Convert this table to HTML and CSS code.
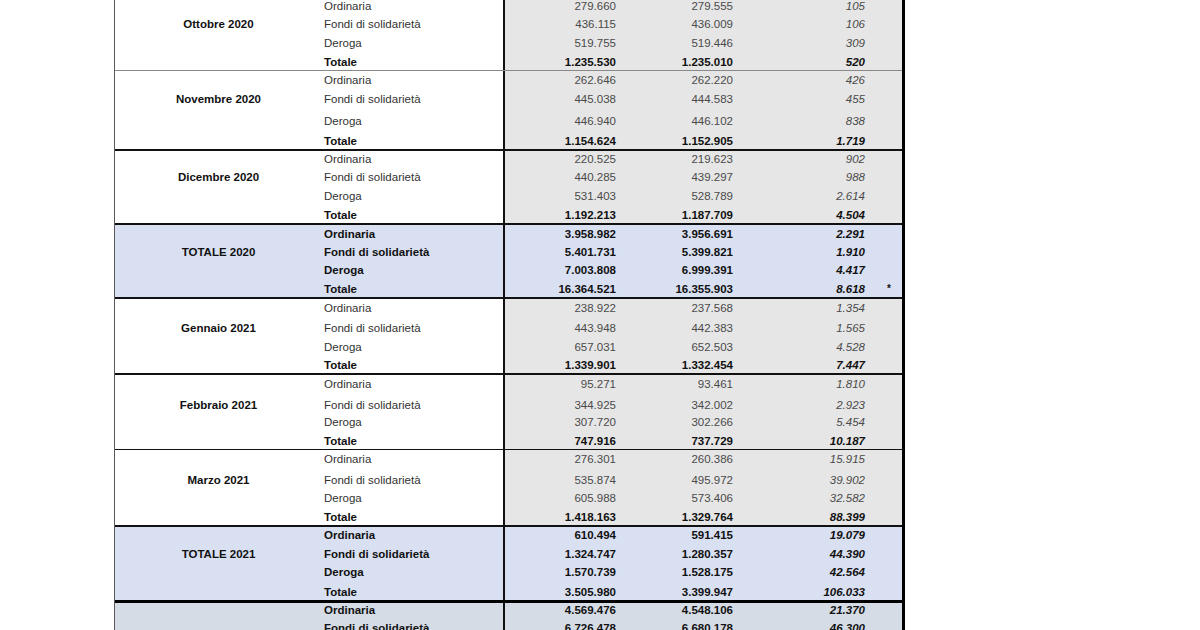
FILE: index.html
```html
<!DOCTYPE html>
<html lang="it">
<head>
<meta charset="utf-8">
<title>Cassa integrazione</title>
<link rel="stylesheet" href="styles.css">
</head>
<body>
<div class="sheet">

  <section class="block month">
    <div class="row h18"><span class="c lbl"></span><span class="c sub">Ordinaria</span><span class="c n n1">279.660</span><span class="c n">279.555</span><span class="c n d">105</span><span class="c x"></span></div>
    <div class="row h18"><span class="c lbl">Ottobre 2020</span><span class="c sub">Fondi di solidarietà</span><span class="c n n1">436.115</span><span class="c n">436.009</span><span class="c n d">106</span><span class="c x"></span></div>
    <div class="row h19"><span class="c lbl"></span><span class="c sub">Deroga</span><span class="c n n1">519.755</span><span class="c n">519.446</span><span class="c n d">309</span><span class="c x"></span></div>
    <div class="row h19 tot"><span class="c lbl"></span><span class="c sub">Totale</span><span class="c n n1">1.235.530</span><span class="c n">1.235.010</span><span class="c n d">520</span><span class="c x"></span></div>
  </section>

  <section class="block month thin">
    <div class="row h17"><span class="c lbl"></span><span class="c sub">Ordinaria</span><span class="c n n1">262.646</span><span class="c n">262.220</span><span class="c n d">426</span><span class="c x"></span></div>
    <div class="row h19"><span class="c lbl">Novembre 2020</span><span class="c sub">Fondi di solidarietà</span><span class="c n n1">445.038</span><span class="c n">444.583</span><span class="c n d">455</span><span class="c x"></span></div>
    <div class="row h22"><span class="c lbl"></span><span class="c sub">Deroga</span><span class="c n n1">446.940</span><span class="c n">446.102</span><span class="c n d">838</span><span class="c x"></span></div>
    <div class="row h20 tot"><span class="c lbl"></span><span class="c sub">Totale</span><span class="c n n1">1.154.624</span><span class="c n">1.152.905</span><span class="c n d">1.719</span><span class="c x"></span></div>
  </section>

  <section class="block month thick">
    <div class="row h16"><span class="c lbl"></span><span class="c sub">Ordinaria</span><span class="c n n1">220.525</span><span class="c n">219.623</span><span class="c n d">902</span><span class="c x"></span></div>
    <div class="row h18"><span class="c lbl">Dicembre 2020</span><span class="c sub">Fondi di solidarietà</span><span class="c n n1">440.285</span><span class="c n">439.297</span><span class="c n d">988</span><span class="c x"></span></div>
    <div class="row h19"><span class="c lbl"></span><span class="c sub">Deroga</span><span class="c n n1">531.403</span><span class="c n">528.789</span><span class="c n d">2.614</span><span class="c x"></span></div>
    <div class="row h19 tot"><span class="c lbl"></span><span class="c sub">Totale</span><span class="c n n1">1.192.213</span><span class="c n">1.187.709</span><span class="c n d">4.504</span><span class="c x"></span></div>
  </section>

  <section class="block total thick">
    <div class="row h17"><span class="c lbl"></span><span class="c sub">Ordinaria</span><span class="c n n1">3.958.982</span><span class="c n">3.956.691</span><span class="c n d">2.291</span><span class="c x"></span></div>
    <div class="row h18"><span class="c lbl">TOTALE 2020</span><span class="c sub">Fondi di solidarietà</span><span class="c n n1">5.401.731</span><span class="c n">5.399.821</span><span class="c n d">1.910</span><span class="c x"></span></div>
    <div class="row h18"><span class="c lbl"></span><span class="c sub">Deroga</span><span class="c n n1">7.003.808</span><span class="c n">6.999.391</span><span class="c n d">4.417</span><span class="c x"></span></div>
    <div class="row h19"><span class="c lbl"></span><span class="c sub">Totale</span><span class="c n n1">16.364.521</span><span class="c n">16.355.903</span><span class="c n d">8.618</span><span class="c x star">*</span></div>
  </section>

  <section class="block month thick">
    <div class="row h17"><span class="c lbl"></span><span class="c sub">Ordinaria</span><span class="c n n1">238.922</span><span class="c n">237.568</span><span class="c n d">1.354</span><span class="c x"></span></div>
    <div class="row h20"><span class="c lbl">Gennaio 2021</span><span class="c sub">Fondi di solidarietà</span><span class="c n n1">443.948</span><span class="c n">442.383</span><span class="c n d">1.565</span><span class="c x"></span></div>
    <div class="row h19"><span class="c lbl"></span><span class="c sub">Deroga</span><span class="c n n1">657.031</span><span class="c n">652.503</span><span class="c n d">4.528</span><span class="c x"></span></div>
    <div class="row h18 tot"><span class="c lbl"></span><span class="c sub">Totale</span><span class="c n n1">1.339.901</span><span class="c n">1.332.454</span><span class="c n d">7.447</span><span class="c x"></span></div>
  </section>

  <section class="block month thick">
    <div class="row h17"><span class="c lbl"></span><span class="c sub">Ordinaria</span><span class="c n n1">95.271</span><span class="c n">93.461</span><span class="c n d">1.810</span><span class="c x"></span></div>
    <div class="row h21"><span class="c lbl">Febbraio 2021</span><span class="c sub">Fondi di solidarietà</span><span class="c n n1">344.925</span><span class="c n">342.002</span><span class="c n d">2.923</span><span class="c x"></span></div>
    <div class="row h17"><span class="c lbl"></span><span class="c sub">Deroga</span><span class="c n n1">307.720</span><span class="c n">302.266</span><span class="c n d">5.454</span><span class="c x"></span></div>
    <div class="row h19 tot"><span class="c lbl"></span><span class="c sub">Totale</span><span class="c n n1">747.916</span><span class="c n">737.729</span><span class="c n d">10.187</span><span class="c x"></span></div>
  </section>

  <section class="block month mid">
    <div class="row h17"><span class="c lbl"></span><span class="c sub">Ordinaria</span><span class="c n n1">276.301</span><span class="c n">260.386</span><span class="c n d">15.915</span><span class="c x"></span></div>
    <div class="row h21"><span class="c lbl">Marzo 2021</span><span class="c sub">Fondi di solidarietà</span><span class="c n n1">535.874</span><span class="c n">495.972</span><span class="c n d">39.902</span><span class="c x"></span></div>
    <div class="row h18"><span class="c lbl"></span><span class="c sub">Deroga</span><span class="c n n1">605.988</span><span class="c n">573.406</span><span class="c n d">32.582</span><span class="c x"></span></div>
    <div class="row h19 tot"><span class="c lbl"></span><span class="c sub">Totale</span><span class="c n n1">1.418.163</span><span class="c n">1.329.764</span><span class="c n d">88.399</span><span class="c x"></span></div>
  </section>

  <section class="block total thick">
    <div class="row h16"><span class="c lbl"></span><span class="c sub">Ordinaria</span><span class="c n n1">610.494</span><span class="c n">591.415</span><span class="c n d">19.079</span><span class="c x"></span></div>
    <div class="row h19"><span class="c lbl">TOTALE 2021</span><span class="c sub">Fondi di solidarietà</span><span class="c n n1">1.324.747</span><span class="c n">1.280.357</span><span class="c n d">44.390</span><span class="c x"></span></div>
    <div class="row h18"><span class="c lbl"></span><span class="c sub">Deroga</span><span class="c n n1">1.570.739</span><span class="c n">1.528.175</span><span class="c n d">42.564</span><span class="c x"></span></div>
    <div class="row h20"><span class="c lbl"></span><span class="c sub">Totale</span><span class="c n n1">3.505.980</span><span class="c n">3.399.947</span><span class="c n d">106.033</span><span class="c x"></span></div>
  </section>

  <section class="block grand heavy">
    <div class="row h15"><span class="c lbl"></span><span class="c sub">Ordinaria</span><span class="c n n1">4.569.476</span><span class="c n">4.548.106</span><span class="c n d">21.370</span><span class="c x"></span></div>
    <div class="row h18"><span class="c lbl"></span><span class="c sub">Fondi di solidarietà</span><span class="c n n1">6.726.478</span><span class="c n">6.680.178</span><span class="c n d">46.300</span><span class="c x"></span></div>
  </section>

</div>
</body>
</html>
```

FILE: styles.css
```css
html, body {
  margin: 0;
  padding: 0;
  background: #ffffff;
  overflow: hidden;
}

body {
  font-family: "Liberation Sans", Arial, sans-serif;
  font-size: 11.5px;
  color: #333333;
}

.sheet {
  margin: -4px 0 0 114px;
  width: 787px;
  border-left: 1px solid #5a5a5a;
  border-right: 3px solid #000000;
}

.block.thin { border-top: 1px solid #8a8a8a; }
.block.mid { border-top: 1px solid #111111; }
.block.thick { border-top: 2px solid #111111; }
.block.heavy { border-top: 3px solid #000000; }

.row {
  display: grid;
  grid-template-columns: 207px 181px 116px 117px 132px 34px;
}

.h15 { height: 15px; }
.h16 { height: 16px; }
.h17 { height: 17px; }
.h18 { height: 18px; }
.h19 { height: 19px; }
.h20 { height: 20px; }
.h21 { height: 21px; }
.h22 { height: 22px; }

.c {
  display: flex;
  align-items: flex-end;
  line-height: 14px;
  padding-bottom: 1px;
  white-space: nowrap;
}

.lbl {
  justify-content: center;
  font-weight: bold;
  color: #111111;
}

.sub {
  padding-left: 2px;
}

.n {
  justify-content: flex-end;
  padding-right: 3px;
}

.n1 {
  border-left: 2px solid #111111;
}

.d {
  font-style: italic;
}

.x {
  justify-content: center;
  padding-left: 8px;
}

.star {
  font-size: 10px;
  font-weight: bold;
  line-height: 12px;
  padding-bottom: 2px;
}

/* monthly blocks */
.month .lbl,
.month .sub {
  background: #ffffff;
}

.month .n,
.month .x {
  background: #e6e6e6;
}

.month .n {
  color: #4a4a4a;
}

.month .tot .c {
  font-weight: bold;
  color: #111111;
}

/* yearly totals */
.total .c {
  background: #d9e0f2;
  font-weight: bold;
  color: #111111;
}

/* grand total */
.grand .c {
  background: #d5dce6;
  font-weight: bold;
  color: #111111;
}
```
